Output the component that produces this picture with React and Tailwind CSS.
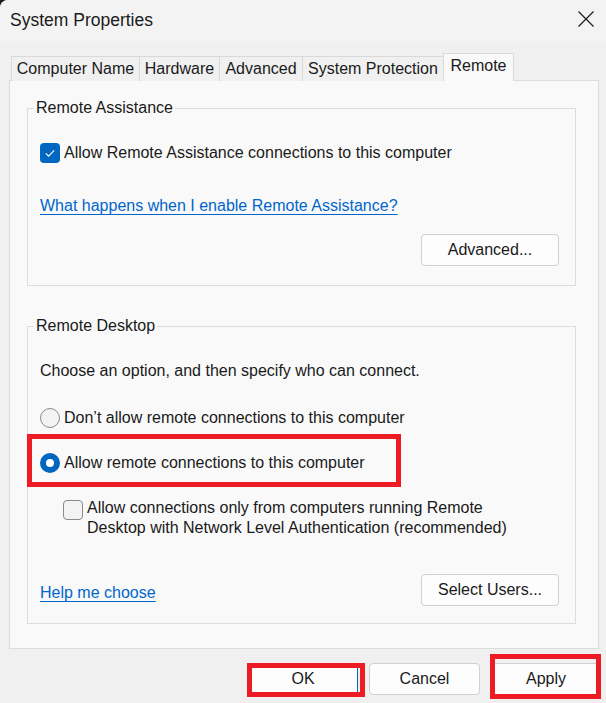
import React from 'react';

const tabs = [
  { label: 'Computer Name', width: 'w-[128px]' },
  { label: 'Hardware', width: 'w-[80px]' },
  { label: 'Advanced', width: 'w-[83px]' },
  { label: 'System Protection', width: 'w-[141px]' },
];

const Checkbox = ({ checked }) =>
  checked ? (
    <span className="w-[20px] h-[20px] rounded-[4px] bg-[#0067c0] flex items-center justify-center shrink-0">
      <svg width="20" height="20" viewBox="0 0 20 20">
        <path d="M5.8 10.4 L8.6 13.2 L14.2 7.4" fill="none" stroke="#ffffff" strokeWidth="1.1" />
      </svg>
    </span>
  ) : (
    <span className="block w-[20px] h-[20px] rounded-[4px] border border-[#8a8a8a] bg-[#f3f3f3] shrink-0" />
  );

const Radio = ({ checked }) =>
  checked ? (
    <span className="w-[20px] h-[20px] rounded-full bg-[#0067c0] flex items-center justify-center shrink-0">
      <span className="w-[8px] h-[8px] rounded-full bg-white" />
    </span>
  ) : (
    <span className="block w-[20px] h-[20px] rounded-full border border-[#8a8a8a] bg-[#f3f3f3] shrink-0" />
  );

const WinButton = ({ children, className = '' }) => (
  <button
    className={`h-[32px] bg-[#fdfdfd] border border-[#d0d0d0] rounded-[4px] text-[16px] text-[#1a1a1a] ${className}`}
  >
    {children}
  </button>
);

export default function App() {
  return (
    <div className="w-[606px] h-[703px] bg-[#1c1c1c] overflow-hidden">
      <div
        className="relative w-[606px] h-[703px] bg-[#f0f0f0] rounded-tl-[8px] text-[#1a1a1a] text-[16px] leading-[20px]"
        style={{ fontFamily: '"Liberation Sans", Arial, sans-serif' }}
      >
        {/* Title bar */}
        <div className="h-[43px] bg-[#f3f3f3] rounded-tl-[8px] flex items-center justify-between pl-[10px] pr-[12px]">
          <span className="text-[17.5px] leading-[22px] pb-[3px]">System Properties</span>
          <svg width="16" height="16" viewBox="0 0 16 16" className="mb-[6px]">
            <path d="M0.5 0.5 L15.5 15.5 M15.5 0.5 L0.5 15.5" stroke="#1a1a1a" strokeWidth="1.2" fill="none" />
          </svg>
        </div>

        {/* Tabs */}
        <div className="flex items-end h-[28px] ml-[11px] mt-[10px]">
          {tabs.map((tab) => (
            <div
              key={tab.label}
              className={`${tab.width} h-[25px] border-t border-l border-[#d9d9d9] bg-[#f0f0f0] flex items-center justify-center`}
            >
              {tab.label}
            </div>
          ))}
          <div className="relative z-10 w-[71px] h-[28px] border-t border-l border-r border-[#d9d9d9] bg-[#f9f9f9] flex items-center justify-center pb-[3px]">
            Remote
          </div>
        </div>

        {/* Panel */}
        <div className="ml-[9px] -mt-px w-[590px] h-[569px] border border-[#dcdcdc] bg-[#f9f9f9] pl-[17px] pt-[18px]">
          <fieldset className="w-[549px] border border-[#dcdcdc] pl-[12px] pr-[16px] pt-[26px] pb-[19px]">
            <legend className="-ml-[6px] px-[2px] leading-[18px]">Remote Assistance</legend>
            <label className="flex items-center gap-[4px]">
              <Checkbox checked />
              <span>Allow Remote Assistance connections to this computer</span>
            </label>
            <div className="mt-[33px]">
              <a className="text-[#0066cc] underline underline-offset-[3px] decoration-[1px]">
                What happens when I enable Remote Assistance?
              </a>
            </div>
            <div className="mt-[18px] flex justify-end">
              <WinButton className="w-[138px]">Advanced...</WinButton>
            </div>
          </fieldset>

          <fieldset className="mt-[31px] w-[549px] border border-[#dcdcdc] pl-[12px] pr-[16px] pt-[26px] pb-[17px]">
            <legend className="-ml-[6px] px-[2px] leading-[18px]">Remote Desktop</legend>
            <p>Choose an option, and then specify who can connect.</p>
            <label className="mt-[27px] flex items-center gap-[4px]">
              <Radio />
              <span>Don’t allow remote connections to this computer</span>
            </label>
            <label className="mt-[25px] flex items-center gap-[4px]">
              <Radio checked />
              <span>Allow remote connections to this computer</span>
            </label>
            <label className="mt-[25px] ml-[23px] flex items-start gap-[4px]">
              <span className="flex mt-[2px]">
                <Checkbox />
              </span>
              <span>
                Allow connections only from computers running Remote
                <br />
                Desktop with Network Level Authentication (recommended)
              </span>
            </label>
            <div className="mt-[36px] flex justify-between items-start">
              <a className="mt-[9px] text-[#0066cc] underline underline-offset-[3px] decoration-[1px]">
                Help me choose
              </a>
              <WinButton className="w-[138px]">Select Users...</WinButton>
            </div>
          </fieldset>
        </div>

        {/* Dialog buttons */}
        <div className="mt-[14px] flex justify-end gap-[11px] pr-[5px]">
          <WinButton className="w-[110px] !border-[#0067c0]">OK</WinButton>
          <WinButton className="w-[111px]">Cancel</WinButton>
          <WinButton className="w-[110px]">Apply</WinButton>
        </div>

        {/* Red annotation boxes */}
        <div className="absolute left-[27px] top-[434px] w-[374px] h-[53px] border-[5px] border-[#ed1c24] pointer-events-none" />
        <div className="absolute left-[247px] top-[663px] w-[118px] h-[34px] border-[5px] border-[#ed1c24] pointer-events-none" />
        <div className="absolute left-[490px] top-[654px] w-[111px] h-[45px] border-[5px] border-[#ed1c24] pointer-events-none" />
      </div>
    </div>
  );
}
